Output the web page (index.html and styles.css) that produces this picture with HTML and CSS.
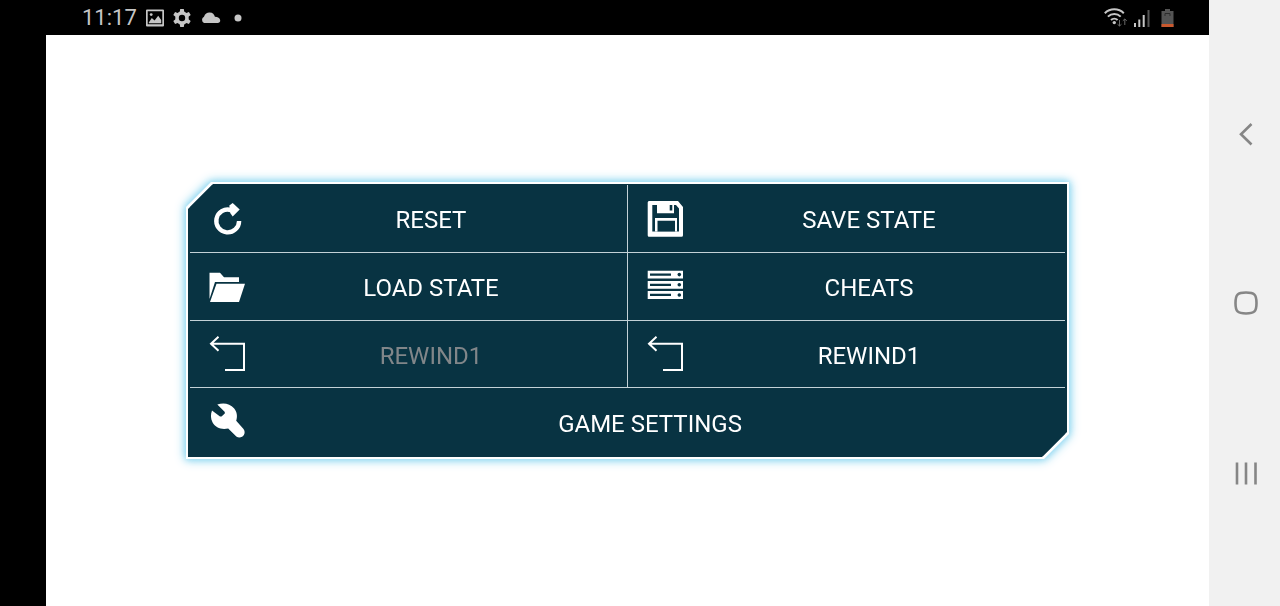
FILE: index.html
```html
<!DOCTYPE html>
<html lang="en">
<head>
<meta charset="utf-8">
<meta name="viewport" content="width=device-width, initial-scale=1">
<title>Game menu</title>
<link rel="stylesheet" href="styles.css">
</head>
<body>
<div class="device">
  <div class="screen">
    <header class="status">
      <div class="notices">
        <time class="clock">11:17</time>
        <svg class="status-icon" width="18" height="18" viewBox="0 0 18 18" aria-hidden="true">
          <path fill-rule="evenodd" d="M1 0.5h16q1 0 1 1v15q0 1-1 1H1q-1 0-1-1v-15q0-1 1-1zM1.7 2.2v13h14.6v-13z"/>
          <path d="M2.8 13.5l3-4.5 2.8 2.6 3.6-4.8 3 4.2v3.2H2.8z"/><circle cx="5.2" cy="5.6" r="1.4"/>
        </svg>
        <svg class="status-icon" width="18" height="18" viewBox="0 0 18 18" aria-hidden="true">
          <circle cx="9" cy="9" r="5" fill="none" stroke="currentColor" stroke-width="3.6"/>
          <path d="M7.2 0h3.6l.6 4H6.600zM7.200 18h3.600l.6-4H6.600zM.3 6l1.800-3.100 3.700 1.500-2.300 4.100zM17.700 12l-1.800 3.100-3.700-1.500 2.300-4.100zM17.700 6l-1.800-3.100-3.700 1.500 2.300 4.100zM.3 12l1.800 3.100 3.700-1.500-2.300-4.100z"/>
        </svg>
        <svg class="status-icon" width="21" height="18" viewBox="0 0 21 18" aria-hidden="true">
          <path d="M4 14a3.500 3.500 0 0 1 0-6.300C5 4.500 7.500 3.300 9.700 3.500c3 0 4.700 2 5.200 4.300 3 .1 5 1.500 5.300 3.500.2 1.700-1 2.700-2.500 2.700z"/>
        </svg>
        <svg class="status-icon more" width="8" height="8" viewBox="0 0 8 8" aria-hidden="true"><circle cx="4" cy="4" r="3.500"/></svg>
      </div>
      <div class="signals">
        <svg class="status-icon" width="24" height="20" viewBox="0 0 24 20" aria-hidden="true">
          <g fill="none" stroke="currentColor" stroke-width="2">
            <path d="M.8 5.200a13.500 13.500 0 0 1 19 0M3.900 8.600a9.200 9.200 0 0 1 12.800 0M7 12a4.800 4.800 0 0 1 6.600 0"/>
          </g>
          <circle cx="10.300" cy="14.600" r="1.700"/>
          <path class="dim-line" d="M15.500 12v6M13.500 16.200l2 1.800 2-1.800M20.800 17v-6M18.800 12.800l2-1.800 2 1.800"/>
        </svg>
        <svg class="status-icon" width="16" height="20" viewBox="0 0 16 20" aria-hidden="true">
          <path d="M0 15h2v4H0zM4.300 11.500h2V19h-2zM8.700 7h2v12h-2z"/><path class="dim" d="M13.500 2h2v17h-2z"/>
        </svg>
        <svg class="status-icon battery" width="13" height="20" viewBox="0 0 13 20" aria-hidden="true">
          <path class="dim" d="M4 1h5v2h3.500v16H.5V3H4z"/><path class="low" d="M.5 16h12v3H.5z"/>
          <path d="M4 8V5.500h5V8" fill="none" stroke="#2c2c2c"/>
        </svg>
      </div>
    </header>
    <main class="stage">
      <div class="glow">
        <div class="frame">
          <div class="panel">
            <nav class="menu" aria-label="Game menu">
              <button class="item" type="button">
                <svg class="icon" viewBox="0 0 36 37" aria-hidden="true"><path class="line thick" d="M30.100 21a11.400 11.400 0 1 1-8.100-10.900"/><path d="M20.300 5.500l3.400-2.500 7 6.400-7 7.200-2.500-3.500z"/></svg>
                <span class="label">RESET</span>
              </button>
              <button class="item" type="button">
                <svg class="icon" viewBox="0 0 36 37" aria-hidden="true">
                  <path d="M2 1h29l5 6v28.200q0 1.500-1.500 1.500H2q-1.300 0-1.300-1.500V2.500Q.7 1 2 1z"/>
                  <path class="cut" d="M5.300 5H10v8.300h17V5h2l3 3.500v23H5.300zM22.700 5h2.600v5.500h-2.600z"/>
                  <path d="M8 18h22v13.500H8z"/><path class="cut" d="M10.500 20.700H28v10.800H10.500z"/>
                </svg>
                <span class="label">SAVE STATE</span>
              </button>
              <button class="item" type="button">
                <svg class="icon" viewBox="0 0 36 37" aria-hidden="true"><path d="M.5 4.700H11l4 4.600h15V14H6L.5 31zM7.500 15.800H36L30 34H1z"/></svg>
                <span class="label">LOAD STATE</span>
              </button>
              <button class="item" type="button">
                <svg class="icon" viewBox="0 0 36 37" aria-hidden="true">
                  <path d="M.7 2.700H36v7.900H.7zM.7 12.900H36v7.900H.7zM.7 23H36v7.900H.7z"/>
                  <path class="cut" d="M3 5.500h21v2.300H3zM3 15.700h21V18H3zM3 25.800h21v2.300H3z"/>
                  <g class="cut"><circle cx="32.300" cy="6.600" r="1.800"/><circle cx="32.300" cy="16.800" r="1.800"/><circle cx="32.300" cy="27" r="1.800"/></g>
                </svg>
                <span class="label">CHEATS</span>
              </button>
              <button class="item" type="button" disabled>
                <svg class="icon" viewBox="0 0 36 37" aria-hidden="true"><path class="line" d="M9.500.7l-7.500 7 7.500 7M2 7.700h33V34H16"/></svg>
                <span class="label">REWIND1</span>
              </button>
              <button class="item" type="button">
                <svg class="icon" viewBox="0 0 36 37" aria-hidden="true"><path class="line" d="M9.500.7l-7.500 7 7.500 7M2 7.700h33V34H16"/></svg>
                <span class="label">REWIND1</span>
              </button>
              <button class="item wide" type="button">
                <svg class="icon" viewBox="0 0 36 37" aria-hidden="true"><path d="M8.300.6C14-1.800 21-.6 25 4.200c3.200 4 3.600 8.300 2.200 12.500l7.300 8.300c3.700 5-2.300 11-7.200 7.500l-8.100-8C12 26 6.500 23.500 3.600 18.500 1.500 14.500 1.500 10.500 3 6.500l8 6h1.500l3.300-3V8z"/></svg>
                <span class="label">GAME SETTINGS</span>
              </button>
            </nav>
          </div>
        </div>
      </div>
    </main>
  </div>
  <nav class="system" aria-label="System navigation">
    <button class="key" type="button" aria-label="Back"><svg width="28" height="27" viewBox="-2 -1 28 27"><path d="M18.500 3L8 13.200l10.500 10.300"/></svg></button>
    <button class="key" type="button" aria-label="Home"><svg width="28" height="27" viewBox="-2 -1 28 27"><path d="M13 2.500c8.500 0 10.500 2 10.500 10.500S21.500 23.500 13 23.500 2.500 21.500 2.500 13 4.500 2.500 13 2.500z"/></svg></button>
    <button class="key" type="button" aria-label="Recent apps"><svg width="28" height="27" viewBox="-2 -1 28 27"><path d="M4 2.500v22M13 2.500v22M22.500 2.500v22"/></svg></button>
  </nav>
</div>
</body>
</html>
```
FILE: styles.css
```css
* {
  box-sizing: border-box;
}

body {
  margin: 0;
  background: #000;
  font-family: Roboto, "Liberation Sans", sans-serif;
}

button {
  margin: 0;
  border: 0;
  font: inherit;
}

.device {
  display: flex;
  min-height: 100vh;
  padding-left: 46px;
}

.screen {
  display: flex;
  flex: 1;
  flex-direction: column;
}

.status {
  display: flex;
  align-items: center;
  justify-content: space-between;
  height: 35px;
  padding: 0 35px 0 36px;
  background: #000;
  color: #c6c6c6;
}

.notices,
.signals {
  display: flex;
  align-items: center;
}

.notices {
  gap: 9px;
}

.signals {
  gap: 6px;
}

.clock {
  font-size: 22px;
  line-height: 36px;
}

.status-icon {
  flex: none;
  fill: currentColor;
}

.more {
  margin-left: 4px;
}

.battery {
  margin-left: 5px;
}

.dim {
  fill: #545454;
}

.dim-line {
  fill: none;
  stroke: #686868;
}

.low {
  fill: #c8582e;
}

.stage {
  display: flex;
  flex: 1;
  flex-direction: column;
  justify-content: center;
  padding: 0 140px;
  background: #fff;
}

.glow {
  filter: drop-shadow(0 0 3px #9bdcf2) drop-shadow(0 0 5px #86d4f0);
}

.frame,
.panel {
  clip-path: polygon(25px 0, 100% 0, 100% calc(100% - 25px), calc(100% - 25px) 100%, 0 100%, 0 25px);
}

.frame {
  padding: 2px;
  background: #fff;
}

.panel {
  padding: 1px 2px;
  background: #083342;
}

.menu {
  display: grid;
  grid-template-rows: 67px 67px 66px 68px;
  grid-template-columns: 1fr 1fr;
  gap: 1px;
  background: #c3d2d7;
}

.item {
  display: flex;
  align-items: center;
  padding: 0 10px 0 19px;
  background: #083342;
  color: #fff;
  font-size: 24px;
}

.wide {
  grid-column: span 2;
}

.icon {
  flex: none;
  width: 36px;
  height: 37px;
  overflow: visible;
  fill: #fff;
}

.icon .cut {
  fill: #083342;
}

.icon .line {
  fill: none;
  stroke: #fff;
  stroke-width: 2;
}

.icon .thick {
  stroke-width: 4.4;
}

.label {
  flex: 1;
  padding-top: 3px;
  text-align: center;
}

.item:disabled .label {
  color: #818689;
}

.system {
  display: flex;
  flex-direction: column;
  width: 71px;
  padding: 49px 0;
  background: #f1f1f1;
}

.key {
  display: flex;
  flex: 1;
  align-items: center;
  justify-content: center;
  padding: 0;
  background: none;
}

.key svg {
  fill: none;
  stroke: #868686;
  stroke-width: 2.6;
}
```
